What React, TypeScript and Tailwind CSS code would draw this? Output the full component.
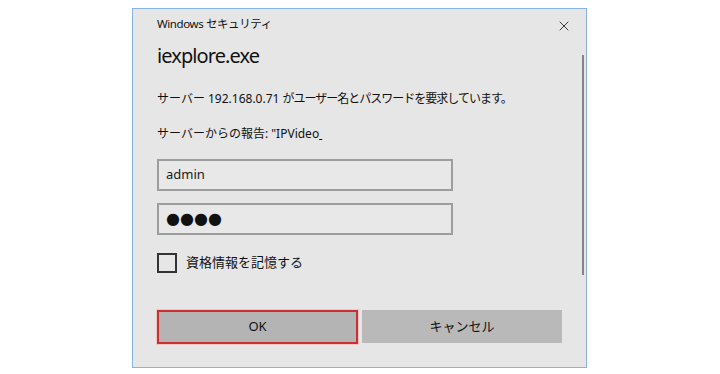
import { X } from "lucide-react";

const jp = "font-['Segoe_UI','Noto_Sans','Noto_Sans_CJK_JP',sans-serif]";

function TextBox({ children, big }: { children: React.ReactNode; big?: boolean }) {
  return (
    <div className="flex h-[32px] w-[296px] items-center border-2 border-[#9d9d9d] bg-[#e8e8e8] pl-[7px]">
      <span className={big ? "text-[16px] leading-none font-['DejaVu_Sans',sans-serif]" : "text-[13px] text-[#1a1a1a]"}>
        {children}
      </span>
    </div>
  );
}

export default function App() {
  return (
    <div className={`min-h-[374px] bg-white pt-[8px] pl-[132px] ${jp}`}>
      <div className="relative flex w-[455px] flex-col border border-[#86b4e2] bg-[#e6e6e6] pl-[24px] text-[#111]">
        {/* title bar */}
        <div className="flex h-[28px] items-center justify-between pr-[14px] pt-[2px] text-[11.5px]">
          <span className="tracking-[-0.4px]">Windows セキュリティ</span>
          <X className="mt-[4px] h-[16px] w-[16px] text-[#222]" strokeWidth={1.3} />
        </div>

        <div className="mt-[5px] text-[20px] leading-[28px] tracking-[-0.9px]">iexplore.exe</div>

        <p className="mt-[20px] text-[12px] leading-[18px]">
          サーバー 192.168.0.71 <span className="tracking-[-1px]">がユーザー名とパスワードを要求しています。</span>
        </p>
        <p className="mt-[17px] text-[12px] leading-[18px]">
          サーバーからの報告: "IPVideo<span className="underline">&nbsp;</span>
        </p>

        <div className="mt-[16px]">
          <TextBox>admin</TextBox>
        </div>
        <div className="mt-[12px]">
          <TextBox big>●●●●</TextBox>
        </div>

        <label className="mt-[17px] flex h-[21px] items-center gap-[9px] text-[13px]">
          <span className="h-[20px] w-[20px] border-2 border-[#333] bg-[#e6e6e6]" />
          資格情報を記憶する
        </label>

        <div className="mt-[37px] mb-[23px] flex gap-[4px] text-[13px]">
          <button className="h-[34px] w-[201px] border-2 border-[#cc2f2f] bg-[#b4b4b4] shadow-[0_0_0_1px_#f0c8c8]">
            OK
          </button>
          <button className="h-[33px] w-[200px] bg-[#b9b9b9]">キャンセル</button>
        </div>

        {/* scrollbar thumb */}
        <div className="absolute right-[2px] top-[46px] h-[220px] w-[2px] bg-[#858585]" />
      </div>
    </div>
  );
}
